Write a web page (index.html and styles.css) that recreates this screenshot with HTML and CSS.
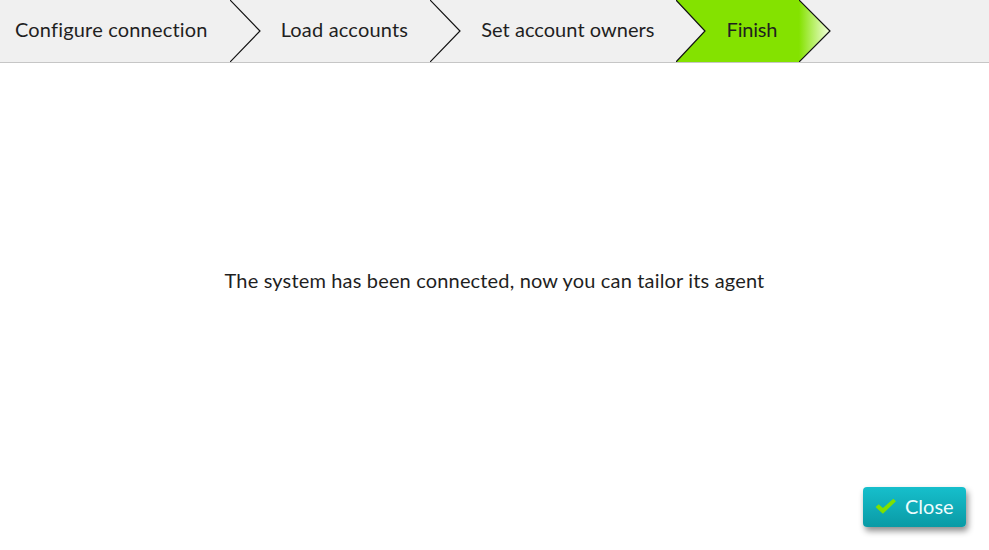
FILE: index.html
```html
<!DOCTYPE html>
<html lang="en">
<head>
<meta charset="utf-8">
<title>Wizard</title>
<link rel="stylesheet" href="styles.css">
</head>
<body>
<div class="page">
  <header class="steps">
    <div class="step first">
      <span class="label">Configure connection</span>
      <svg class="chev" width="31" height="62" viewBox="0 0 31 62"><polyline points="0,0 30,31 0,62" fill="none" stroke="#111" stroke-width="1.2"/></svg>
    </div>
    <div class="step">
      <span class="label">Load accounts</span>
      <svg class="chev" width="31" height="62" viewBox="0 0 31 62"><polyline points="0,0 30,31 0,62" fill="none" stroke="#111" stroke-width="1.2"/></svg>
    </div>
    <div class="step">
      <span class="label tight">Set account owners</span>
      <svg class="chev" width="31" height="62" viewBox="0 0 31 62"><polygon points="0,0 31,0 31,62 0,62 29,31" fill="#84e200"/><polyline points="0,0 29,31 0,62" fill="none" stroke="#111" stroke-width="1.2"/></svg>
    </div>
    <div class="step active">
      <span class="label">Finish</span>
      <svg class="chev" width="32" height="62" viewBox="0 0 32 62"><defs><linearGradient id="g" x1="0" y1="0" x2="1" y2="0"><stop offset="0" stop-color="#84e200"/><stop offset="1" stop-color="#f4ffe0"/></linearGradient></defs><polygon points="0,0 31,31 0,62" fill="url(#g)"/><polyline points="0,0 31,31 0,62" fill="none" stroke="#111" stroke-width="1.2"/></svg>
    </div>
  </header>
  <main class="content">
    <p class="message">The system has been connected, now you can tailor its agent</p>
  </main>
  <footer class="actions">
    <button class="btn-close" type="button">
      <svg class="check" width="23" height="19" viewBox="0 0 22 18"><path d="M1.5 9.5 L4.5 6.8 L8.5 10.5 L18.5 1.5 L21 4 L8.5 16 Z" fill="#7fe000"/></svg>
      <span>Close</span>
    </button>
  </footer>
</div>
</body>
</html>
```
FILE: styles.css
```css
* { box-sizing: border-box; }
html, body { margin: 0; padding: 0; }
body {
  background: #fff;
  font-family: Lato, "Open Sans", sans-serif;
  color: #1f1f1f;
}
.page {
  height: 100vh;
  display: flex;
  flex-direction: column;
}
.steps {
  display: flex;
  align-items: stretch;
  height: 63px;
  background: #f0f0f0;
  border-bottom: 1px solid #c6c6c6;
}
.step {
  display: flex;
  align-items: center;
  padding-left: 20px;
  height: 62px;
  font-size: 20px;
  letter-spacing: 0.18px;
}
.step .label { margin-right: 22px; white-space: nowrap; padding-bottom: 5px; }
.step .label.tight { letter-spacing: 0.05px; margin-right: 21px; }
.step.first { padding-left: 15px; }
.step .chev { display: block; flex: none; }
.step.active { background: #84e200; padding-left: 20px; }
.step.active .label { letter-spacing: -0.2px; margin-right: 21px; }
.step.active .chev { background: #f0f0f0; margin-left: 1px; }
.content {
  display: flex;
  justify-content: center;
  padding-top: 204px;
}
.message {
  margin: 0;
  font-size: 20px;
  letter-spacing: 0.16px;
  line-height: 26px;
  color: #1f1f1f;
}
.actions {
  margin-top: auto;
  display: flex;
  justify-content: flex-end;
  padding: 0 23px 23px 0;
}
.btn-close {
  display: flex;
  align-items: center;
  gap: 8px;
  width: 103px;
  height: 40px;
  padding: 0 0 2px 11px;
  border: none;
  border-radius: 4px;
  background: linear-gradient(#16bfcc, #0a9aa5);
  box-shadow: 2px 4px 6px rgba(0,0,0,0.45);
  color: #eefcfd;
  font-family: Lato, "Open Sans", sans-serif;
  font-size: 20px;
}
.check { display: block; }
```
